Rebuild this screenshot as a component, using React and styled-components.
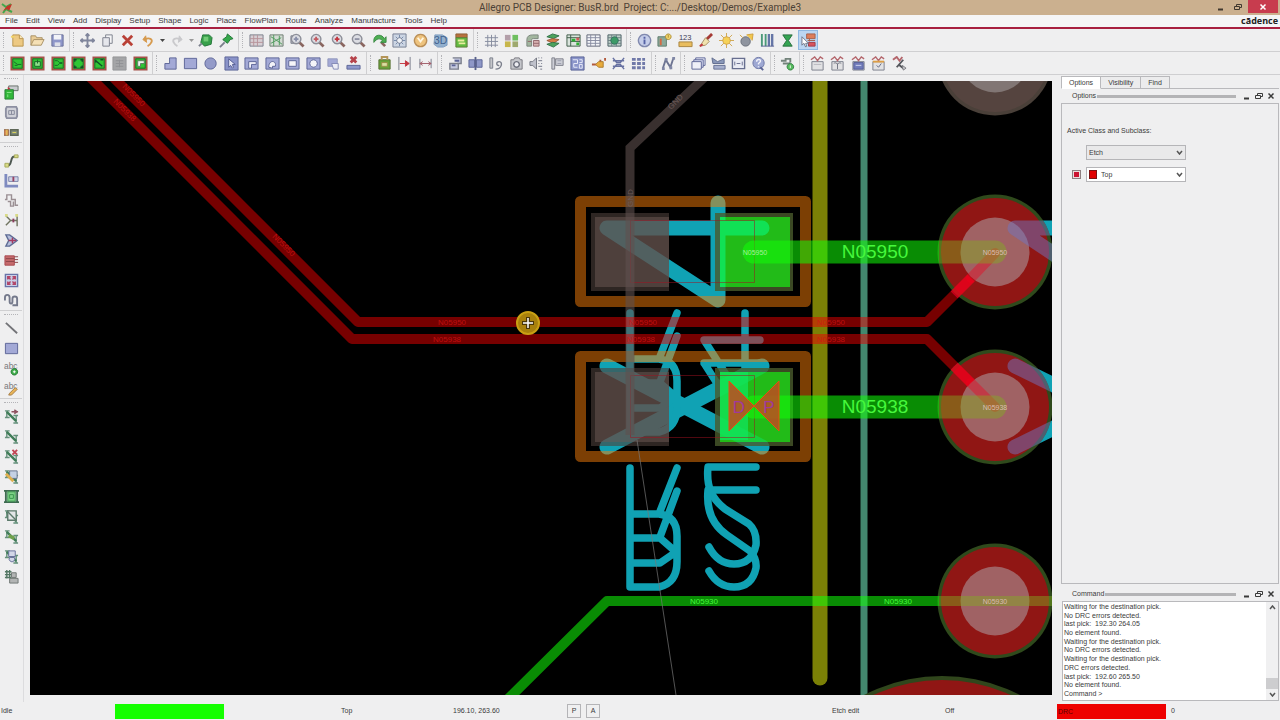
import React from 'react';
import styled, { createGlobalStyle } from 'styled-components';

const GlobalStyle = createGlobalStyle`
  * { box-sizing: border-box; }
  body {
    margin: 0;
    background: #efeff0;
    color: #3a3a3a;
    font-family: "Liberation Sans", Arial, sans-serif;
    font-size: 7px;
    line-height: 10px;
  }
  button, input, select { font: inherit; color: inherit; }
  button { margin: 0; padding: 0; border: 0; background: none; }
`;

const BLUE = '#a3a9d6';
const NAVY = '#5c6496';
const GRAY = '#7b7f8c';
const GREEN = '#2fae35';
const DARK = '#3d5a48';
const RED = '#c2343e';
const GOLD = '#dfb04f';

// each shape is [path, fill, stroke, stroke width], or { text, x, y, size, fill }
const board = [['M1.5 1.5h13v13h-13z', '#30c634', '#a5524a', 2], ['M3 3h10v10H3z', 'none', '#1f6d2c', 1]];
const glass = (color) => [
  ['M10 10l4.5 4.5', 'none', '#8a6660', 3],
  ['M6.5 1.5a5 5 0 1 0 .1 0z', '#dcdde3', '#8c8e98', 1.5],
  ['M4 6.5h5M6.5 4v5', 'none', color, 2],
];
const plane = [['M1.5 2.5h13v11h-13z', BLUE, NAVY, 1]];
const rat = [
  ['M3 2v7M1 2h5M1 9h5M13 7v8M10 7h5M10 15h5', 'none', '#64907a', 1.5],
  ['M3 3l10 10', 'none', '#3f7c57', 2.5],
];
const padlock = [['M2 6h12v9H2z', '#e2e2e4', GRAY, 1], ['M1 4l4-3 3 4 3-4 3 2', 'none', '#b4666c', 1.5]];
const abc = { text: 'abc', x: 0, y: 8, size: 9, fill: '#77787a' };

const shapes = {
  newFile: [['M3 2h7l4 4v8H3z', '#edc983', '#b9924c', 1], ['M10 2v4h4', '#fbeabc', '#b9924c', 1], ['M1 4h4', 'none', '#f2d46b', 2]],
  open: [['M1 13V3h5l1 2h6v2', '#e9cc96', '#a89064', 1], ['M1 13l3-6h11l-3 6z', '#f5e0b5', '#a89064', 1]],
  save: [['M2 2h12v12H2z', '#8e96c9', '#6a7098', 1], ['M4 2h8v5H4z', '#f2f3f8', 'none', 0], ['M5 10h6v4H5z', '#dddfe8', 'none', 0]],
  move: [['M8 1v14M1 8h14M6 3l2-2 2 2M6 13l2 2 2-2M3 6L1 8l2 2M13 6l2 2-2 2', 'none', '#80869c', 2]],
  copy: [['M6 2h7v9H6z', '#f5f5f7', GRAY, 1], ['M3 5h7v9H3z', '#e6e7ec', GRAY, 1]],
  remove: [['M3 3l10 10M13 3L3 13', 'none', '#b94036', 3]],
  undo: [['M5 3L2 7l4 3z', '#d69a4e', '#d69a4e', 1], ['M4 7c5-3 9 0 7 3-1 2-2 3-4 4', 'none', '#d69a4e', 2]],
  redo: [['M11 3l3 4-4 3z', '#c9c9cc', '#c9c9cc', 1], ['M12 7C7 4 3 7 5 10c1 2 2 3 4 4', 'none', '#c9c9cc', 2]],
  fix: [['M5 2h7l3 3-1 7-7 2-4-4z', '#38a04b', '#23753a', 1], ['M6 4h5v5H6z', '#71cb76', 'none', 0], ['M4 11l-3 3', 'none', GRAY, 2]],
  pin: [['M9 1l6 5-3 1-3 4-5-4 4-3z', '#35a84b', '#23753a', 1], ['M6 10l-5 5', 'none', GRAY, 2]],
  ratsOff: [['M1 2h14v12H1z', '#d7cfd4', GRAY, 1], ['M5 2v12M9 2v12M1 6h14M1 10h14', 'none', '#b8939b', 1]],
  ratsOn: [['M1 2h14v12H1z', '#d3dbd3', '#6c7a70', 1], ['M2 4l5 3 7 5M5 2v12M11 3v10M2 11l11-6', 'none', '#4e9a5c', 1]],
  zoomArea: [['M1 3h9v8H1z', '#b8bac8', GRAY, 1], ...glass('#8a90aa')],
  zoomFit: glass('#c25b62'),
  zoomIn: glass('#c2343e'),
  zoomOut: [...glass('#dcdde3'), ['M4 6.500h5', 'none', '#9194a6', 2]],
  zoomPrev: [['M10 10l4 4', 'none', '#8a6660', 3], ['M2 7c1-6 9-6 11-1l2-2v6H9l2-2C8 5 5 6 2 10z', '#4daf52', '#3a8743', 1]],
  zoomWorld: [['M1 1h14v14H1z', '#cdd6e4', '#747d92', 1], ['M8 2v12M2 8h12M4 4l8 8M12 4l-8 8', 'none', '#7288a8', 1], ['M8 5a3 3 0 1 0 .1 0z', '#eef2f7', '#747d92', 1]],
  refresh: [['M8 1.500a6.500 6.500 0 1 0 .1 0z', '#eec37e', '#ba8f58', 1.5], ['M5 5l3 4 3-4', 'none', '#fff6e2', 2]],
  view3d: [['M2 2h8l5 3v8l-4 2H5l-4-3z', '#93b0ce', '#7d9cbf', 1], { text: '3D', x: 1, y: 12, size: 11, fill: '#41628f' }],
  layers: [['M2 1h12v4H2z', '#b8713e', '#8d6037', 1], ['M2 5h12v10H2z', '#62bb41', '#5f7b3a', 1], ['M4 8h7M5 11h7', 'none', '#e9eea0', 2]],
  grid: [['M4 2v13M8 2v13M12 2v13M1 5h14M1 9h14M1 13h14', 'none', '#858c9e', 1]],
  palette: [['M1 2h6v6H1z', '#b39fa9', 'none', 0], ['M9 2h6v6H9z', '#6fbf60', 'none', 0], ['M1 9h6v6H1z', '#c7b64b', 'none', 0], ['M9 9h6v6H9z', '#9ea96e', 'none', 0]],
  shadow: [['M2 14V7c0-3 2-5 6-5h6v4H9c-2 0-2 1-2 2v6z', '#a2b69f', '#7b867d', 1], ['M9 8h6v6H9zM3 9h4M9 11h6', '#d7b0b0', '#91666c', 1]],
  stack: [['M2 4l6-3 7 2-6 3z', '#4ca25c', '#32724a', 1], ['M2 8l6-2 7 1-6 4z', '#d77c46', '#98563a', 1], ['M2 12l6-2 7 1-6 4z', '#4ca25c', '#32724a', 1]],
  xsection: [['M1 2h14v12H1z', '#dae4dd', DARK, 1], ['M1 5h14M5 2v12M5 9h10', 'none', DARK, 1], ['M6 6h4v3H6zM11 10h3v3h-3z', GREEN, 'none', 0], ['M11 5h3v3h-3z', '#cf5b5b', 'none', 0]],
  sheet: [['M1 2h14v12H1z', '#f3f4f8', '#5e6375', 1], ['M1 5h14M1 8h14M1 11h14M5 2v12M10 2v12', 'none', '#868ba0', 1]],
  constraints: [['M1 2h14v12H1z', '#bfd1c9', '#4a5e64', 1], ['M1 5h14M1 8h14M1 11h14M5 2v12M10 2v12', 'none', '#6d8084', 1], ['M8 4a4 4 0 1 0 .1 0z', '#3c9a66', '#306c5c', 1]],
  info: [['M8 1.500a6.500 6.500 0 1 0 .1 0z', '#c5cde9', '#8089ae', 1.5], ['M8 4v2M8 7v5', 'none', '#5562a4', 2]],
  report: [['M1 4h9v10H1z', '#8ba99a', '#5e7b6c', 1], ['M3 6h2v7H3z', '#d46a44', 'none', 0], ['M12 1a3 3 0 1 0 .1 0zM12 2v3', '#f2d56a', '#ad8d35', 1]],
  measure: [['M1 9.500h14v5H1z', '#e9bd5e', '#a98440', 1], { text: '123', x: 1, y: 7, size: 8, fill: '#3d4058' }],
  brush: [['M15 1l-6 6', 'none', '#a53a36', 3], ['M8 5l4 4-4 4-6 1z', '#f0e2ae', '#a38c61', 1], ['M5 12l-3 2', 'none', RED, 2]],
  sun: [['M8 0v16M0 8h16M2 2l12 12M14 2L2 14', 'none', '#cfa651', 1], ['M8 4a4 4 0 1 0 .1 0z', '#f6d258', '#d1a040', 1]],
  dim: [['M8 2l7-1-1 7', '#f1c64e', '#cfa03c', 1], ['M7 4a5 5 0 1 0 .1 0z', '#8f949f', '#686d78', 1], ['M1 2l3 3', 'none', '#cfa03c', 1]],
  bars: [['M2 1v13M6 1v13', 'none', '#4b9a79', 2], ['M9.500 1v13M13 1v13', 'none', '#6575a6', 2.5], ['M1 14h14', 'none', NAVY, 1]],
  hourglass: [['M3 2h10L9 8l4 6H3l4-6z', '#35a552', '#256d3d', 1]],
  pick: [['M6 1h9v5H6z', '#de7d5a', '#a5604c', 1], ['M7 8h8M9 6v3', 'none', '#a5604c', 1], ['M8 10h7v4H8z', '#d8545c', '#a03c47', 1], ['M1 4v9l2-2 2 4 1-1-1-3h3z', '#fff', '#6d7384', 1]],
  b1: [...board, ['M4 6l4 3h4M5 10h3', 'none', '#176527', 1]],
  b2: [...board, ['M5 6h6v5H5zM8 4v4', '#8fe08a', '#176527', 1]],
  b3: [...board, ['M4 5h3l2 2h3M4 10h3l2-2h3', 'none', '#176527', 1]],
  b4: [...board, ['M6 4H4v2M10 4h2v2M6 12H4v-2M10 12h2v-2', 'none', '#104f28', 1.5]],
  b5: [...board, ['M4 5l7 6M4 4v3M9 4h3', 'none', '#104f28', 1.5]],
  b6: [['M1 1h14v14H1z', '#a4a5a7', '#949597', 1], ['M4 5h8M4 8h8M4 11h8M8 4v8', 'none', '#909194', 1]],
  b7: [...board, ['M5 11V5h7v3H8v3z', '#f0f5ef', '#5b7c61', 1]],
  poly: [['M2 14V8h5V2h7v12z', BLUE, NAVY, 1]],
  rect: plane,
  circle: [['M8 2a6 6 0 1 0 .1 0z', '#949bc9', NAVY, 1]],
  select: [['M1 1h14v14H1z', '#8a93c9', NAVY, 1], ['M5 3v9l2-2 2 3 1-1-1-3h3z', '#e8eaf6', '#515b92', 1]],
  voidPoly: [['M1 2h14v12H1z', BLUE, NAVY, 1], ['M5 13V6h8v3H8v4z', '#f3f3f8', NAVY, 1]],
  voidCut: [['M1 2h14v12H1z', BLUE, NAVY, 1], ['M4 12c0-9 9-7 7-1H8v2z', '#f3f3f8', NAVY, 1]],
  voidRect: [['M1 2h14v12H1z', BLUE, NAVY, 1], ['M4 5h8v6H4z', '#f5f5f9', NAVY, 1]],
  voidCircle: [['M1 2h14v12H1z', BLUE, NAVY, 1], ['M8 4a4 4 0 1 0 .1 0z', '#f5f5f9', NAVY, 1]],
  voidMove: [['M2 3h10v8H2z', BLUE, '#9096bc', 1], ['M6 8h7v6H8z', '#ecedf5', '#8289b4', 1]],
  island: [['M1 10h14v4H1z', '#8e97cb', NAVY, 1], ['M5 1l6 6M11 1L5 7', 'none', '#b6444c', 3]],
  package: [['M2 4h12v10H2z', '#68a239', '#596f35', 1], ['M5 4V1h6v3', 'none', '#b49557', 2], ['M5 7h6v4H5z', '#d9e0a2', '#9b8f47', 1]],
  dimV: [['M2 1v14M14 1v14', 'none', GRAY, 1], ['M3 8h10M9 5l4 3-4 3z', RED, RED, 1]],
  dimH: [['M2 3v10M14 3v10', 'none', GRAY, 1], ['M2 8h12M5 6L2 8l3 2M11 6l3 2-3 2', 'none', '#a05c67', 1]],
  n1: [['M2 8h9v6H2zM5 2h9v6h-3', '#c6cadf', GRAY, 1.5], ['M4 10h4M7 5h5', 'none', NAVY, 2]],
  n2: [['M1 4h6v8H1zM9 4h6v8H9z', '#8e97c7', NAVY, 1], ['M8 1v14', 'none', '#59618b', 2]],
  n3: [['M2 2h3v11H2z', '#c5c6cb', GRAY, 1], ['M8 14c7 0 8-8 4-8s-3 5 0 4', 'none', GRAY, 1.5]],
  n4: [['M2 4h3l1-2h5l1 2h2v10H2z', '#c5c6cb', '#77787f', 1], ['M8 6a3 3 0 1 0 .1 0z', '#ededf2', '#6b6e7b', 1.5]],
  n5: [['M1 6h3l4-4v12l-4-4H1z', '#bfc1cb', '#71747f', 1], ['M10 2h1M13 2h1M10 5h4M10 8h1M13 8h1M10 11h4M12 14h2', 'none', '#6f7384', 1]],
  n6: [['M2 2h3v12H2zM6 3h8v7H6z', '#cdced6', '#7d7f8a', 1], ['M8 5h4M8 8h4', 'none', '#9c9fae', 1]],
  n7: [['M1 1h14v14H1z', '#8c96ca', '#555f94', 1], ['M3 4h5v4H4v4h4M10 4h3v3h-3M10 9h3v4h-3z', 'none', '#eceefa', 1]],
  n8: [['M1 9h5M10 4v4M15 2v3', 'none', '#b25a3d', 2], ['M8 6h5v6H8l-3-3z', '#e8ab3c', '#ac7b2e', 1]],
  n9: [['M2 2l4 5h4l4-5M2 14l4-5h4l4 5M2 5h12M2 11h12', 'none', '#6670a1', 1.5]],
  n10: [['M1 2h4v3H1zM6.500 2h4v3h-4zM12 2h3v3h-3zM1 6.500h4v3H1zM6.500 6.500h4v3h-4zM12 6.500h3v3h-3zM1 11h4v3H1zM6.500 11h4v3h-4zM12 11h3v3h-3z', '#7079a9', 'none', 0]],
  wave: [['M2 13l3-9 5 8 3-9', 'none', '#6d7492', 2], ['M1 12h3v3H1zM4 2h3v3H4zM9 11h3v3H9zM12 1h3v3h-3z', '#8087a5', 'none', 0]],
  cascade: [['M5 2h10v8H5z', '#eceefa', NAVY, 1], ['M3 4h10v8H3z', '#d9def3', NAVY, 1], ['M1 6h10v8H1z', '#eff0f8', NAVY, 1]],
  tile: [['M1 2l6 4 7-3v5H2z', '#8a98b9', '#5f6b8d', 1], ['M3 10h12v4H3z', '#a7b0ce', '#646f92', 1]],
  wire: [['M1.500 2.500h13v11h-13z', '#e9ebf4', '#676e8f', 1.5], ['M4 6v4M6 8h4M12 6v4', 'none', '#676e8f', 1]],
  help: [['M8 1.500a6 6 0 1 0 .1 0z', '#9ea8d3', '#6c75a4', 1], ['M6 6c0-3 5-3 4 0l-2 2v1M8 11v1', 'none', '#f2f3fb', 1.5], ['M10 12l3 3', 'none', NAVY, 2]],
  drill: [['M1 5h6M3 8h8M5 3h6v4', 'none', '#73837b', 2], ['M11 8a3.500 3.500 0 1 0 .1 0z', '#57bb5e', '#348145', 1], ['M11 10v3', 'none', '#eef8ec', 1]],
  u1: [...padlock, ['M4 9h8', 'none', '#b8b8be', 1]],
  u2: [...padlock, ['M8 8v6M4 8c1-1 3-1 4 1 1-2 3-2 4-1', 'none', '#6f727f', 1]],
  u3: [...padlock, ['M3 7h10v7H3z', '#727dbb', '#535d96', 1], ['M5 10h6', 'none', '#ced3ef', 1]],
  u4: [...padlock, ['M2 6h12', 'none', '#dc9e45', 2], ['M6 10l2 2 3-4', 'none', '#5f6680', 1]],
  u5: [['M1 4l4-3 3 4 3-4', 'none', '#b4666c', 2], ['M12 4l-7 8M7 9l5 4', 'none', '#55575d', 2], ['M11 10l4 3-3 2z', '#d5d5d8', '#77797e', 1]],
  place: [['M5 1h10v5H5z', '#c9cbcf', '#66716a', 1], ['M1 5h9v10H1z', '#32b83a', '#277f37', 1], ['M3 8h5M4 10v3', 'none', '#8be28c', 1], ['M4 2l3 2-3 1z', RED, 'none', 0]],
  chip: [['M3 2h10l1 2v8l-1 2H3l-1-2V4z', '#d1d2d9', '#8d90a2', 2], ['M5 6h6v4H5zM8 6v4', 'none', '#85899b', 1]],
  resistor: [['M0 5h5v6H0z', '#da8d57', '#8c6447', 1], ['M7 5h8v6H7z', '#808c78', '#5e6757', 1.5], ['M3 5v6M9 8h4', 'none', '#e1d65a', 1]],
  route: [['M1 13h4c3 0 2-8 5-9h5', 'none', '#4d5751', 2], ['M1 11h4v4H1zM11 2h4v3h-4z', '#d9db88', '#a6aa5c', 1]],
  slide: [['M2 1v13h13', 'none', '#7f8bc0', 3], ['M5 4h10v5H5z', '#cfd3e7', '#7a83aa', 1], ['M10 4v5', 'none', '#984463', 2]],
  tune: [['M1 7h2V2h5v5h4v6h3M4 9h3v5h3V9', 'none', '#9a8f93', 1.5]],
  split: [['M2 3l5 5-5 5M14 2v12M7 8h7', 'none', '#717561', 1.5], ['M1 1h3v3H1zM12 1h3v3h-3z', '#d9db88', 'none', 0], ['M10 6v4', 'none', '#8b3c60', 2]],
  fan: [['M2 2h4l8 6-8 6H2l3-6z', '#b5bfdc', '#5e6c95', 1.5], ['M5 8h8M9 5v6', 'none', '#a63b60', 1.5]],
  bus: [['M1 3h10v10H1z', '#c56a6c', '#a8474e', 1], ['M11 4h4M11 7h4M11 10h4M2 6h9M2 9h9', 'none', '#8a4449', 1]],
  matrix: [['M1.500 1.500h13v13h-13z', '#c9cfe7', '#6873a8', 1.5], ['M4 4l3 3M12 4L9 7M4 12l3-3M12 12L9 9M4 7V4h3M12 7V4H9M4 9v3h3M12 9v3H9', 'none', '#b24467', 1.5]],
  snake: [['M1 8V5c0-4 5-4 5 0v4c0 3 3 3 3 0V6c0-3 5-3 5 0v7H9', 'none', '#74798b', 2]],
  line: [['M2 2l12 11', 'none', '#727377', 2]],
  plane,
  text: [abc, ['M11 8a3.500 3.500 0 1 0 .1 0z', '#3cab48', '#257b35', 1], ['M11 10v3M9.500 11.500h3', 'none', '#fff', 1]],
  editText: [abc, ['M6 13l6-6 2 2-6 6-3 0z', '#e8b457', '#a47c44', 1]],
  r1: [...rat, ['M8 3h7M11 1l3 2-3 2', 'none', '#8e5360', 1.5]],
  r2: rat,
  r3: [...rat, ['M9 1l5 5M14 1L9 6', 'none', '#c14553', 2]],
  r4: [...rat, ['M6 2h8v8H6z', '#c5d1e4', '#67758e', 1], ['M2 5l8 8', 'none', GOLD, 3]],
  r5: [['M0 2h16M0 14h16M2 1v14M14 1v14', 'none', '#3d6b50', 2], ['M4 3h8v10H4z', '#7ed387', '#39944c', 1], ['M6 6h4v4H6z', 'none', '#39944c', 1]],
  r6: [...rat, ['M4 2h9v10H4z', '#e3e6e7', '#5d7b6c', 1.5], ['M4 3l9 9', 'none', '#5d7b6c', 1.5]],
  r7: [...rat, ['M5 7l6 3', 'none', '#6fa04d', 4]],
  r8: [...rat, ['M5 2h7v6H5zM6 9a3 3 0 1 0 5 0z', '#d3d7e8', '#68709a', 1]],
  r9: [['M1 3h7M1 6h7M1 9h7M3 1v9M6 1v9', 'none', '#547764', 1.5], ['M8 4h5v5H8zM6 10h9v5H6z', '#b3b5b5', '#6f7673', 1]],
};

const topRow = [
  [70, ['newFile', 'open', 'save']],
  [169, ['move', 'copy', 'remove', 'undo', 'caret', 'redo', 'caretOff', 'fix', 'pin']],
  [235, ['ratsOff', 'ratsOn', 'zoomArea', 'zoomFit', 'zoomIn', 'zoomOut', 'zoomPrev', 'zoomWorld', 'refresh', 'view3d', 'layers']],
  [153, ['grid', 'palette', 'shadow', 'stack', 'xsection', 'sheet', 'constraints']],
  [194, ['info', 'report', 'measure', 'brush', 'sun', 'dim', 'bars', 'hourglass', 'pick']],
];

const bottomRow = [
  [153, ['b1', 'b2', 'b3', 'b4', 'b5', 'b6', 'b7']],
  [214, ['poly', 'rect', 'circle', 'select', 'voidPoly', 'voidCut', 'voidRect', 'voidCircle', 'voidMove', 'island']],
  [71, ['package', 'dimV', 'dimH']],
  [214, ['n1', 'n2', 'n3', 'n4', 'n5', 'n6', 'n7', 'n8', 'n9', 'n10']],
  [29, ['wave']],
  [90, ['cascade', 'tile', 'wire', 'help']],
  [29, ['drill']],
  [112, ['u1', 'u2', 'u3', 'u4', 'u5']],
];

const sideGroups = [
  ['place', 'chip', 'resistor'],
  ['route', 'slide', 'tune', 'split', 'fan', 'bus', 'matrix', 'snake'],
  ['line', 'plane', 'text', 'editText'],
  ['r1', 'r2', 'r3', 'r4', 'r5', 'r6', 'r7', 'r8', 'r9'],
];

const menus = ['File', 'Edit', 'View', 'Add', 'Display', 'Setup', 'Shape', 'Logic', 'Place', 'FlowPlan', 'Route', 'Analyze', 'Manufacture', 'Tools', 'Help'];

const log = [
  'Waiting for the destination pick.',
  'No DRC errors detected.',
  'last pick:  192.30 264.05',
  'No element found.',
  'Waiting for the destination pick.',
  'No DRC errors detected.',
  'Waiting for the destination pick.',
  'DRC errors detected.',
  'last pick:  192.60 265.50',
  'No element found.',
];

const Window = styled.div`
  display: flex;
  flex-direction: column;
  min-height: 100vh;
`;

const TitleBar = styled.header`
  display: grid;
  grid-template-columns: 1fr auto 1fr;
  height: 15px;
  background: #cbb08f;
`;

const AppLogo = styled.svg`
  width: 12px;
  height: 12px;
  margin: 2px 0 0 1px;
`;

const WindowTitle = styled.h1`
  margin: 0;
  font: 10px/16px Roboto, "Noto Sans", sans-serif;
  color: #4c4136;
  white-space: pre;
`;

const WindowButtons = styled.div`
  display: flex;
  justify-content: flex-end;
  padding-right: 2px;
`;

const WindowButton = styled.button`
  display: flex;
  align-items: center;
  justify-content: center;
  width: ${props => (props.$close ? 30 : 17)}px;
  height: 13px;
  background: ${props => (props.$close ? '#c83c4e' : 'transparent')};
  color: ${props => (props.$close ? '#fff' : '#40382e')};
  margin-left: ${props => (props.$close ? 2 : 0)}px;
`;

const MenuBar = styled.nav`
  display: flex;
  align-items: center;
  height: 14px;
  padding-left: 1px;
  border-bottom: 2px solid #a82040;
  background: #f5f5f6;
`;

const MenuItem = styled.button`
  padding: 0 4px;
  font-size: 8px;
  line-height: 12px;
`;

const Brand = styled.span`
  margin-left: auto;
  padding-right: 2px;
  font: bold 9px/12px "Open Sans", sans-serif;
  color: #222;
`;

const ToolRow = styled.div`
  display: flex;
  height: 23px;
  border-bottom: 1px solid #cfcfd1;
`;

const ToolGroup = styled.div`
  display: flex;
  align-items: center;
  justify-content: space-between;
  width: ${props => props.$width}px;
  padding: 0 2px 0 3px;
  border-right: 1px solid ${props => (props.$last ? 'transparent' : '#cfcfd1')};

  &::before {
    content: "";
    width: 1px;
    height: 16px;
    margin-right: 2px;
    border-left: 1px dotted #b4b4b8;
  }
`;

const Tools = styled.div`
  display: flex;
  flex: 1;
  justify-content: space-between;
`;

const ToolButton = styled.button`
  display: flex;
  align-items: center;
  justify-content: center;
  width: ${props => (props.$small ? 8 : 20)}px;
  height: 20px;
  background: ${props => (props.$active ? '#bcd6f2' : 'none')};
  box-shadow: ${props => (props.$active ? 'inset 0 0 0 1px #8fb8e2' : 'none')};
`;

const Glyph = styled.svg`
  width: ${props => props.$size}px;
  height: ${props => props.$size}px;
`;

const Workspace = styled.main`
  display: flex;
  flex: 1;
`;

const SideDock = styled.aside`
  width: 24px;
  border-right: 1px solid #dcdcde;
`;

const SideGroup = styled.div`
  display: flex;
  flex-direction: column;
  width: 22px;
  padding: 3px 1px 0;
  border-bottom: 1px solid ${props => (props.$last ? 'transparent' : '#cfcfd1')};

  &::before {
    content: "";
    height: 1px;
    margin: 0 3px 2px;
    border-top: 1px dotted #b4b4b8;
  }
`;

const CanvasArea = styled.section`
  display: flex;
  flex: 1;
  min-width: 0;
  padding: 6px 9px 7px 6px;
`;

const Drawing = styled.svg`
  flex: 1;
  width: 0;
  background: #000;
  font-family: "Liberation Sans", Arial, sans-serif;
`;

const RightDock = styled.aside`
  display: flex;
  flex-direction: column;
  width: 219px;
  padding: 1px 1px 1px 0;
`;

const TabList = styled.div`
  display: flex;
  height: 13px;
  border-bottom: 1px solid #b9b9bc;
`;

const Tab = styled.button`
  height: 13px;
  padding: 0 7px;
  border: 1px solid #b9b9bc;
  border-bottom-color: ${props => (props.$active ? '#fff' : '#b9b9bc')};
  border-left-width: ${props => (props.$active ? 1 : 0)}px;
  background: ${props => (props.$active ? '#fff' : '#ececed')};
`;

const PanelHead = styled.div`
  display: flex;
  align-items: center;
  height: 14px;
  padding: 0 2px 0 11px;
`;

const Rule = styled.span`
  flex: 1;
  height: 3px;
  margin: 0 5px 0 1px;
  background: #b4b4b6;
`;

const PanelButton = styled.button`
  display: flex;
  align-items: center;
  justify-content: center;
  width: 12px;
  height: 12px;
`;

const OptionsBody = styled.div`
  flex: 1;
  margin-bottom: 3px;
  padding: 22px 5px 0;
  border: 1px solid #b9b9bc;
`;

const Caption = styled.p`
  margin: 0 0 9px;
`;

const OptionRow = styled.div`
  display: flex;
  align-items: center;
  height: 15px;
  margin-bottom: 7px;
  padding-left: 5px;
`;

const SubclassToggle = styled.input`
  appearance: none;
  width: 9px;
  height: 9px;
  margin: 0;
  border: 1px solid #8d7f80;
  background: #cc1230;
  box-shadow: inset 0 0 0 1px #eadcdc;
`;

const Field = styled.div`
  display: flex;
  align-items: center;
  position: relative;
  width: 100px;
  height: 15px;
  margin-left: ${props => (props.$indent ? 14 : 5)}px;
  border: 1px solid #b5b5b8;
  background: ${props => (props.$indent ? '#e9e9ea' : '#fff')};

  svg {
    position: absolute;
    right: 2px;
    pointer-events: none;
  }
`;

const Swatch = styled.span`
  width: 8px;
  height: 9px;
  margin-left: 2px;
  border: 1px solid #7c1010;
  background: #e00000;
`;

const Select = styled.select`
  appearance: none;
  flex: 1;
  height: 13px;
  padding: 0 12px 0 ${props => (props.$swatch ? 4 : 2)}px;
  border: 0;
  background: transparent;
`;

const CommandBox = styled.div`
  display: flex;
  height: 100px;
  margin-left: 1px;
  border: 1px solid #b9b9bc;
  background: #fff;
`;

const Log = styled.div`
  display: flex;
  flex: 1;
  flex-direction: column;
  justify-content: space-between;
  padding: 1px 0 2px 1px;
  line-height: 8px;
  white-space: pre;
`;

const LogLine = styled.div`
  height: 8px;
`;

const Prompt = styled.label`
  display: flex;
  height: 8px;
`;

const PromptInput = styled.input`
  flex: 1;
  min-width: 0;
  height: 8px;
  padding: 0 2px;
  border: 0;
  outline: 0;
  background: transparent;
`;

const ScrollBar = styled.div`
  display: flex;
  flex-direction: column;
  width: 12px;
  background: #f0f0f1;
`;

const ScrollButton = styled.button`
  display: flex;
  align-items: center;
  justify-content: center;
  height: 11px;
`;

const Thumb = styled.div`
  height: 11px;
  margin-top: auto;
  background: #cdcdcf;
`;

const StatusBar = styled.footer`
  display: grid;
  grid-template-columns: 115px 225px 112px 115px 1fr 113px 113px 113px 110px;
  align-items: center;
  height: 18px;
`;

const StatusCell = styled.span`
  padding-left: 1px;
`;

const StatusBlock = styled.span`
  width: 109px;
  height: 15px;
  padding-left: 1px;
  background: ${props => props.$color};
  color: #5b0000;
  line-height: 15px;
`;

const StatusButtons = styled.div`
  display: flex;
  gap: 5px;
`;

const StatusButton = styled.button`
  width: 14px;
  height: 14px;
  border: 1px solid #b4b4b7;
`;

const Icon = ({ name, size = 16 }) => (
  <Glyph $size={size} viewBox="0 0 16 16" aria-hidden="true">
    {shapes[name].map((shape, i) => {
      if (shape.text) {
        return <text key={i} x={shape.x} y={shape.y} fontSize={shape.size} fill={shape.fill}>{shape.text}</text>;
      }
      const [d, fill, stroke, width] = shape;
      return <path key={i} d={d} fill={fill} stroke={stroke} strokeWidth={width} />;
    })}
  </Glyph>
);

const Tool = ({ name }) => {
  if (name.startsWith('caret')) {
    return (
      <ToolButton $small aria-label={name}>
        <svg width="5" height="3"><path d="M0 0h5L2.500 3z" fill={name === 'caret' ? '#444' : '#999'} /></svg>
      </ToolButton>
    );
  }
  return <ToolButton aria-label={name} $active={name === 'pick'}><Icon name={name} size={15} /></ToolButton>;
};

const ToolBar = ({ groups }) => (
  <ToolRow role="toolbar">
    {groups.map(([width, names], i) => (
      <ToolGroup key={i} $width={width} $last={i === groups.length - 1}>
        <Tools>{names.map(name => <Tool key={name} name={name} />)}</Tools>
      </ToolGroup>
    ))}
  </ToolRow>
);

const Minimize = () => <svg width="8" height="8"><path d="M1 6.500h5" stroke="currentColor" strokeWidth="2" /></svg>;
const Restore = () => <svg width="8" height="8" fill="none" stroke="currentColor"><path d="M2.500 3V1.500h5v3H6M.5 3.500h5v3h-5z" /></svg>;
const Close = () => <svg width="8" height="8"><path d="M1.500 1.500l5 5M6.500 1.500l-5 5" stroke="currentColor" strokeWidth="1.500" /></svg>;
const Chevron = ({ up }) => <svg width="7" height="5" fill="none"><path d={up ? 'M1 4l2.500-3L6 4' : 'M1 1l2.500 3L6 1'} stroke="#555" strokeWidth="1.500" /></svg>;

const PanelTitle = ({ children }) => (
  <PanelHead>
    <span>{children}</span>
    <Rule />
    <PanelButton aria-label="Minimize"><Minimize /></PanelButton>
    <PanelButton aria-label="Float"><Restore /></PanelButton>
    <PanelButton aria-label="Close"><Close /></PanelButton>
  </PanelHead>
);

const Via = ({ y }) => (
  <g>
    <circle cx="995" cy={y} r="57.500" fill="#2f4a1c" />
    <circle cx="995" cy={y} r="54" fill="#901614" />
    <circle cx="995" cy={y} r="34.500" fill="#a06264" />
  </g>
);

const Letter = ({ y }) => (
  <path
    transform={`translate(0 ${y})`}
    d="M630 0V119H659Q677 115 677 94V68Q677 48 659 46H630M630 70H660L676 84L660 95H630M677 0L659 46M677 23L660 69"
  />
);

const BoardView = () => (
  <Drawing viewBox="30 81 1022 614" preserveAspectRatio="xMidYMid slice" role="img" aria-label="Board">
    <defs>
      <clipPath id="vias">
        <circle cx="995" cy="252" r="57.500" />
        <circle cx="995" cy="407" r="57.500" />
      </clipPath>
      <clipPath id="pads">
        <path d="M720 217h70v70h-70zM720 372h70v70h-70z" />
      </clipPath>
    </defs>

    <g fill="none" stroke="#10a2b4" strokeLinecap="round" strokeLinejoin="round">
      <g strokeWidth="15">
        <path d="M718 203V300L607 228H762" />
        <path d="M607 366L762 447M762 366L607 447" />
        <path d="M1060 228H1015L1060 258M1015 366L1060 388M1015 447L1060 425" />
      </g>
      <g strokeWidth="7.500">
        <Letter y={313} />
        <Letter y={468} />
        <path d="M745 313V400M760 340H704L745 404M745 363H704L745 427M704 363H762" />
        <path d="M756 467H708C706 487 712 499 725 509L749 524Q757 531 756 545Q752 564 734 564Q718 564 709 547" />
        <path d="M756 490H708C706 511 714 526 727 535L750 551Q757 559 756 568Q752 587 734 587Q718 587 709 571" />
      </g>
    </g>

    <path d="M820 70V678" stroke="#f6ff0c" strokeOpacity=".5" strokeWidth="15" strokeLinecap="round" />
    <path d="M864 81V695" stroke="#43876e" strokeWidth="7" />

    <g fill="none" stroke="#f87e08" strokeOpacity=".5" strokeWidth="11" strokeLinejoin="round">
      <path d="M580.500 201.500H805.500V301.500H580.500Z" />
      <path d="M580.500 356.500H805.500V456.500H580.500Z" />
    </g>

    {[0, 155].map(dy => (
      <g key={dy} transform={`translate(0 ${dy})`}>
        <path d="M591 213h78v78h-78z" fill="#4d403b" fillOpacity=".6" />
        <path d="M595 217h74v70h-74z" fill="#6e5a55" fillOpacity=".5" />
        <path d="M715 213h78v78h-78z" fill="#4a5a2c" fillOpacity=".8" />
        <path d="M720 217h70v70h-70z" fill="#22bb18" />
      </g>
    ))}
    <g clipPath="url(#pads)" fill="none" stroke="#10e55c" strokeLinecap="round">
      <path d="M718 203V300M718 228H762" strokeWidth="15" strokeOpacity=".9" />
      <path d="M685 407L762 447M762 366L685 407" stroke="#18cf3c" strokeWidth="15" />
      <path d="M720 372h28v68h-28z" fill="#10e55c" fillOpacity=".75" stroke="none" />
    </g>
    <g fill="none" stroke="#a01020" strokeOpacity=".5">
      <path d="M630.500 220.500H754.500V282.500H630.500Z" />
      <path d="M630.500 375.500H754.500V437.500H630.500Z" />
    </g>

    <path d="M706 76L630 148V435" fill="none" stroke="#5f504e" strokeOpacity=".6" strokeWidth="9" />
    <text fontSize="8" fill="#6d5c5a" transform="translate(671 110) rotate(-45)">GND</text>
    <text fontSize="8" fill="#6d5c5a" transform="translate(633 207) rotate(-90)">GND</text>

    <circle cx="995" cy="58" r="57.500" fill="#4a4039" />
    <circle cx="995" cy="58" r="54" fill="#55443f" />
    <circle cx="995" cy="58" r="34.500" fill="#817674" />
    <Via y={252} />
    <Via y={407} />
    <Via y={601} />
    <circle cx="942" cy="846" r="170" fill="#30461c" />
    <circle cx="942" cy="846" r="166" fill="#901614" />
    <g clipPath="url(#vias)">
      <path
        d="M1060 228H1015L1060 258M1015 366L1060 388M1015 447L1060 425"
        fill="none"
        stroke="#7074c0"
        strokeOpacity=".5"
        strokeWidth="15"
        strokeLinecap="round"
        strokeLinejoin="round"
      />
    </g>

    <g fill="none" stroke="#ee0000" strokeOpacity=".5" strokeWidth="10" strokeLinejoin="round">
      <path d="M112 76L358 322H927L954 295" />
      <path d="M89 76L352 339H927L954 366" />
    </g>
    <g fill="none" stroke="#f0001c" strokeWidth="10">
      <path d="M954 295L971 278M954 366L971 383" strokeOpacity=".8" />
      <path d="M971 278L995 253M971 383L995 407" strokeOpacity=".4" strokeLinecap="round" />
    </g>
    <g fill="#d01414" fontSize="8" fillOpacity=".8">
      <text x="438" y="325">N05950</text>
      <text x="629" y="325">N05950</text>
      <text x="817" y="325">N05950</text>
      <text x="433" y="342">N05938</text>
      <text x="627" y="342">N05938</text>
      <text x="817" y="342">N05938</text>
      <text transform="translate(272 237) rotate(45)">N05950</text>
      <text transform="translate(122 87) rotate(45)">N05950</text>
      <text transform="translate(113 102) rotate(45)">N05938</text>
    </g>

    <g fill="#10ff08" fillOpacity=".55">
      <path d="M939 240.500H754a11.500 11.500 0 0 0 0 23H939z" />
      <path d="M939 395.500H754a11.500 11.500 0 0 0 0 23H939z" />
    </g>
    <path d="M505 702L607 601H939" fill="none" stroke="#10ff08" strokeOpacity=".55" strokeWidth="10" strokeLinejoin="round" />
    <g fill="#80b020" fillOpacity=".45">
      <path d="M939 240.500H995a11.500 11.500 0 0 1 0 23H939z" />
      <path d="M939 395.500H995a11.500 11.500 0 0 1 0 23H939z" />
      <path d="M939 596H1052v10H939z" />
    </g>
    <g fill="#46f83c" textAnchor="middle">
      <text x="875" y="258" fontSize="19">N05950</text>
      <text x="875" y="413" fontSize="19">N05938</text>
      <text x="704" y="604" fontSize="8">N05930</text>
      <text x="898" y="604" fontSize="8">N05930</text>
      <text x="755" y="255" fontSize="7" fill="#a6f09a">N05950</text>
    </g>
    <g fill="#dcbcb2" fontSize="7" textAnchor="middle">
      <text x="995" y="255">N05950</text>
      <text x="995" y="410">N05938</text>
      <text x="995" y="604">N05930</text>
    </g>

    <path d="M729 381L779 431V381L729 431Z" fill="#c04a20" fillOpacity=".85" stroke="#e0540c" />
    <g fill="#a0389c" fontSize="17" textAnchor="middle">
      <text x="739" y="413">D</text>
      <text x="769" y="413">P</text>
    </g>
    <path d="M637 440L676 695" stroke="#777" strokeWidth=".7" />

    <circle cx="528" cy="323" r="11" fill="#a8800c" stroke="#c9a014" strokeWidth="2" />
    <path d="M522 323H534M528 317V329" stroke="#4a3608" strokeWidth="4" />
    <path d="M523 323H533M528 318V328" stroke="#fff" strokeWidth="1.500" />
  </Drawing>
);

const App = () => (
  <>
    <GlobalStyle />
    <Window>
      <TitleBar>
        <AppLogo viewBox="0 0 12 12">
          <path d="M1 2l4 3 5-3M2 11l3-4 6 3" stroke="#3fa94c" strokeWidth="2" fill="none" />
          <path d="M2 9l4-5 5-2-3 7-2-2z" fill="#c63227" />
        </AppLogo>
        <WindowTitle>{'Allegro PCB Designer: BusR.brd  Project: C:.../Desktop/Demos/Example3'}</WindowTitle>
        <WindowButtons>
          <WindowButton aria-label="Minimize"><Minimize /></WindowButton>
          <WindowButton aria-label="Restore"><Restore /></WindowButton>
          <WindowButton aria-label="Close" $close><Close /></WindowButton>
        </WindowButtons>
      </TitleBar>
      <MenuBar>
        {menus.map(menu => <MenuItem key={menu}>{menu}</MenuItem>)}
        <Brand>cādence</Brand>
      </MenuBar>
      <ToolBar groups={topRow} />
      <ToolBar groups={bottomRow} />
      <Workspace>
        <SideDock>
          {sideGroups.map((names, i) => (
            <SideGroup key={i} $last={i === sideGroups.length - 1}>
              {names.map(name => <Tool key={name} name={name} />)}
            </SideGroup>
          ))}
        </SideDock>
        <CanvasArea><BoardView /></CanvasArea>
        <RightDock>
          <TabList role="tablist">
            <Tab role="tab" aria-selected="true" $active>Options</Tab>
            <Tab role="tab" aria-selected="false">Visibility</Tab>
            <Tab role="tab" aria-selected="false">Find</Tab>
          </TabList>
          <PanelTitle>Options</PanelTitle>
          <OptionsBody>
            <Caption>Active Class and Subclass:</Caption>
            <OptionRow>
              <Field $indent>
                <Select aria-label="Active class" defaultValue="Etch"><option>Etch</option></Select>
                <Chevron />
              </Field>
            </OptionRow>
            <OptionRow>
              <SubclassToggle type="checkbox" aria-label="Subclass visible" defaultChecked />
              <Field>
                <Swatch />
                <Select $swatch aria-label="Active subclass" defaultValue="Top"><option>Top</option></Select>
                <Chevron />
              </Field>
            </OptionRow>
          </OptionsBody>
          <PanelTitle>Command</PanelTitle>
          <CommandBox>
            <Log>
              {log.map((line, i) => <LogLine key={i}>{line}</LogLine>)}
              <Prompt>
                {'Command >'}
                <PromptInput type="text" />
              </Prompt>
            </Log>
            <ScrollBar>
              <ScrollButton aria-label="Scroll up"><Chevron up /></ScrollButton>
              <Thumb />
              <ScrollButton aria-label="Scroll down"><Chevron /></ScrollButton>
            </ScrollBar>
          </CommandBox>
        </RightDock>
      </Workspace>
      <StatusBar>
        <StatusCell>Idle</StatusCell>
        <StatusBlock $color="#14ff00" />
        <StatusCell>Top</StatusCell>
        <StatusCell>196.10, 263.60</StatusCell>
        <StatusButtons>
          <StatusButton>P</StatusButton>
          <StatusButton>A</StatusButton>
        </StatusButtons>
        <StatusCell>Etch edit</StatusCell>
        <StatusCell>Off</StatusCell>
        <StatusBlock $color="#ee0000">DRC</StatusBlock>
        <StatusCell>0</StatusCell>
      </StatusBar>
    </Window>
  </>
);

export default App;
